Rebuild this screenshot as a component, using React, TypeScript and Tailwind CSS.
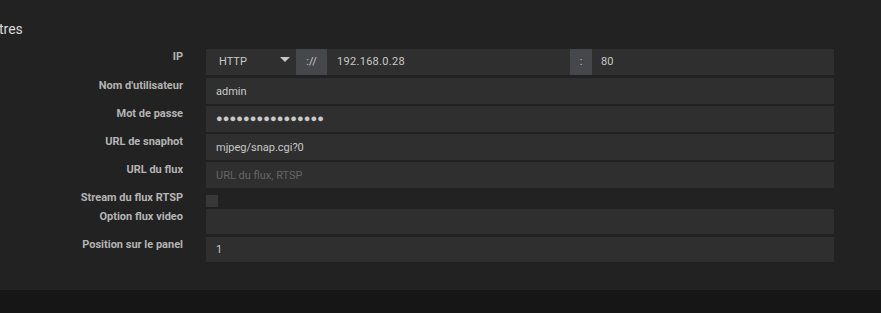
import React from 'react';

const font = { fontFamily: 'Roboto, "Liberation Sans", sans-serif' };

const Label: React.FC<{ children: React.ReactNode }> = ({ children }) => (
  <div className="text-right text-[11px] leading-[16px] font-bold text-[#b4b4b4] whitespace-nowrap">{children}</div>
);

const TextBox: React.FC<{ value?: string; placeholder?: string; h?: string }> = ({ value, placeholder, h = 'h-[26px]' }) => (
  <input
    type="text"
    readOnly
    defaultValue={value}
    placeholder={placeholder}
    className={`${h} block w-full bg-[#2f2f2f] px-[10px] text-[11px] text-[#c8c8c8] placeholder:text-[#666] outline-none`}
    style={font}
  />
);

export default function App() {
  return (
    <div className="w-[881px] h-[313px] flex flex-col bg-[#161616]" style={font}>
      <section className="h-[290px] bg-[#222222]">
        <h2 className="pt-[20px] h-[49px] text-[14px] leading-[18px] text-[#d8d8d8] -ml-[1px]">tres</h2>
        <div className="grid grid-cols-[183px_1fr] gap-x-[23px] pr-[47px]">
          <Label>IP</Label>
          <div className="mb-[3px] flex h-[26px]">
            <div className="relative flex w-[90px] items-center bg-[#2f2f2f] pl-[13px] text-[11px] text-[#c8c8c8]">
              HTTP
              <svg className="absolute left-[74px] top-[8px]" width="10" height="5" viewBox="0 0 10 5">
                <path d="M0 0h10L5 5z" fill="#c8c8c8" />
              </svg>
            </div>
            <div className="flex w-[31px] items-center justify-center bg-[#45474a] text-[11px] text-[#c8c8c8]">://</div>
            <div className="flex w-[243px] items-center bg-[#2f2f2f] pl-[10px] text-[11px] tracking-[0.3px] text-[#c8c8c8]">192.168.0.28</div>
            <div className="flex w-[22px] items-center justify-center bg-[#45474a] text-[11px] text-[#c8c8c8]">:</div>
            <div className="flex flex-1 items-center bg-[#2f2f2f] pl-[9px] text-[11px] text-[#c8c8c8]">80</div>
          </div>

          <Label>Nom d'utilisateur</Label>
          <div className="mb-[2px]"><TextBox value="admin" /></div>

          <Label>Mot de passe</Label>
          <div className="mb-[2px] flex h-[26px] items-center bg-[#2f2f2f] px-[10px] text-[11px] tracking-[0.1px] text-[#c8c8c8]">
            ●●●●●●●●●●●●●●●●
          </div>

          <Label>URL de snaphot</Label>
          <div className="mb-[2px]"><TextBox value="mjpeg/snap.cgi?0" /></div>

          <Label>URL du flux</Label>
          <div className="mb-[2px]"><TextBox placeholder="URL du flux, RTSP" /></div>

          <Label>Stream du flux RTSP</Label>
          <div className="mb-[2px] flex h-[17px] items-end">
            <div className="h-[12px] w-[12px] bg-[#383838]" />
          </div>

          <Label>Option flux video</Label>
          <div className="mb-[3px]"><TextBox h="h-[25px]" /></div>

          <Label>Position sur le panel</Label>
          <div><TextBox value="1" h="h-[25px]" /></div>
        </div>
      </section>
    </div>
  );
}
